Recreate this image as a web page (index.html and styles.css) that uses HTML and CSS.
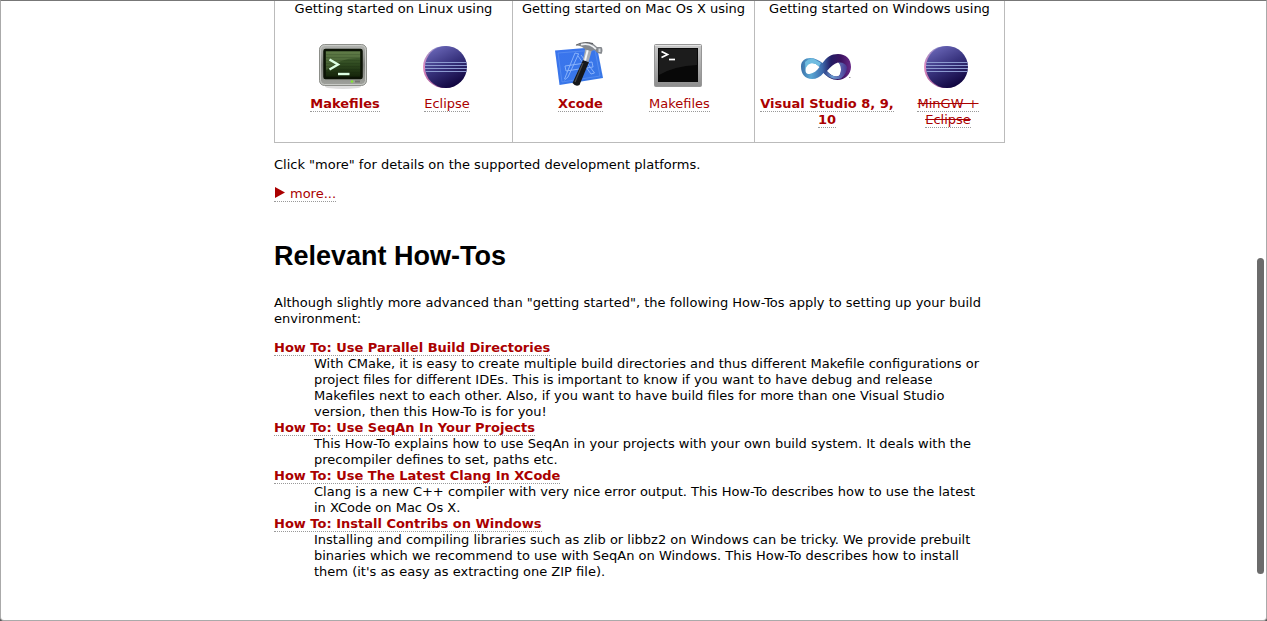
FILE: index.html
```
<!DOCTYPE html>
<html lang="en">
<head>
<meta charset="utf-8">
<title>Getting Started</title>
<link rel="stylesheet" href="styles.css">
</head>
<body>
<svg width="0" height="0" class="defs" aria-hidden="true">
  <defs>
    <linearGradient id="ball" x1="0.25" y1="0" x2="0.75" y2="1"><stop offset="0" stop-color="#6a67b8"/><stop offset="0.45" stop-color="#39347f"/><stop offset="1" stop-color="#0c0038"/></linearGradient>
    <linearGradient id="rim" x1="0" y1="0" x2="0" y2="1"><stop offset="0" stop-color="#8c8cc8"/><stop offset="0.5" stop-color="#e08cc0"/><stop offset="1" stop-color="#a05a9a"/></linearGradient>
    <linearGradient id="case" x1="0" y1="0" x2="0" y2="1"><stop offset="0" stop-color="#b4b6b2"/><stop offset="0.5" stop-color="#7f817c"/><stop offset="1" stop-color="#a0a29d"/></linearGradient>
    <linearGradient id="crt" x1="0" y1="0" x2="0" y2="1"><stop offset="0" stop-color="#55703e"/><stop offset="0.5" stop-color="#2f4a20"/><stop offset="1" stop-color="#122008"/></linearGradient>
    <linearGradient id="steel" x1="0" y1="0" x2="0" y2="1"><stop offset="0" stop-color="#c9c9c9"/><stop offset="1" stop-color="#8e8e8e"/></linearGradient>
    <linearGradient id="paper" x1="0" y1="0" x2="1" y2="1"><stop offset="0" stop-color="#3a74ee"/><stop offset="1" stop-color="#3878e6"/></linearGradient>
    <linearGradient id="loop" gradientUnits="userSpaceOnUse" x1="0" y1="0" x2="50" y2="0"><stop offset="0" stop-color="#3a70a8"/><stop offset="0.2" stop-color="#5aa8d4"/><stop offset="0.42" stop-color="#3d6cae"/><stop offset="0.6" stop-color="#241c64"/><stop offset="0.8" stop-color="#3c1260"/><stop offset="1" stop-color="#6a2a88"/></linearGradient>
    <linearGradient id="fold" gradientUnits="userSpaceOnUse" x1="22" y1="0" x2="46" y2="0"><stop offset="0" stop-color="#2b3580"/><stop offset="0.4" stop-color="#6a9cd2"/><stop offset="1" stop-color="#4a3590"/></linearGradient>
    <symbol id="eclipse" viewBox="0 0 48 48">
      <ellipse cx="23.5" cy="25" rx="21.5" ry="21" fill="url(#rim)"/>
      <ellipse cx="25" cy="25" rx="21" ry="21" fill="url(#ball)"/>
      <path d="M4.500 20.500H45.500M4 23.500H46M4 26.500H46M4.500 29.500H45.500" stroke="#8c9ad0" stroke-width="1"/>
    </symbol>
  </defs>
</svg>
<div class="window">
<main class="page">
  <div class="platforms">
    <section class="platform linux">
      <p class="intro">Getting started on Linux using</p>
      <div class="tools">
        <div class="tool">
          <svg class="icon" viewBox="0 0 48 48" aria-hidden="true">
            <ellipse cx="24" cy="44.500" rx="18" ry="2.500" fill="#ddd"/>
            <rect x="0.500" y="2.500" width="47" height="41" rx="5" fill="url(#case)" stroke="#8c8e89"/>
            <rect x="1.500" y="3.500" width="45" height="39" rx="4" fill="none" stroke="#c8cac6"/>
            <rect x="5.500" y="8" width="37" height="28" rx="1" fill="url(#crt)" stroke="#0b1205" stroke-width="2.500"/>
            <path d="M7 9.500H41V16Q22 15 8 28H7Z" fill="#90ac70" opacity=".25"/>
            <path d="M7 12.500H41M7 15.500H41M7 18.500H41M7 21.500H41M7 24.500H41M7 27.500H41M7 30.500H41" stroke="#10200a" opacity=".15"/>
            <path d="M10.500 17.500L19 22.500L10.500 27.500" fill="none" stroke="#dcffe4" stroke-width="2.400"/>
            <path d="M19 32H30.500" stroke="#dcffe4" stroke-width="2.400"/>
            <circle cx="33" cy="39.500" r="1.300" fill="#80e830"/><path d="M36 39.500H41" stroke="#747670" stroke-width="2"/>
          </svg>
          <a class="preferred" href="#makefiles-linux">Makefiles</a>
        </div>
        <div class="tool">
          <svg class="icon" aria-hidden="true"><use href="#eclipse"/></svg>
          <a href="#eclipse-linux">Eclipse</a>
        </div>
      </div>
    </section>
    <section class="platform mac">
      <p class="intro">Getting started on Mac Os X using</p>
      <div class="tools">
        <div class="tool">
          <svg class="icon" viewBox="0 0 48 48" aria-hidden="true">
            <path d="M0 8.500L42 5L48 36L4.500 43Z" fill="url(#paper)"/>
            <path d="M3 11L40 8L45 34L7 40Z" fill="none" stroke="#6698f4" stroke-width=".6"/>
            <path d="M20 11L9.500 37M23.500 12L13 35L9.500 38M20 11L24 12M23 14L36 32L39.500 31L26 13M10 24L37 20L38 25L11 29Z" fill="none" stroke="#90b8fc" stroke-width=".9"/>
            <path d="M28 18L34 20L24.500 43Q20.500 45 17.500 41Z" fill="#16181a"/>
            <path d="M28 21L20 40" stroke="#4a4a4a" stroke-width="1.200"/>
            <path d="M30.500 6L37 7.500L33.500 20L28 18Z" fill="#a9adb2"/><path d="M33 7L30 18.500" stroke="#f4f6f8" stroke-width="2"/>
            <path d="M20.500 3.500Q29 -1 38 1.500L42 5L46.500 5Q48.500 8 46.500 12L42.500 11L39.500 8L36 9L30 7.500Q27 3.500 20.500 3.500Z" fill="#85898e"/>
            <path d="M21 3Q29 -1 38 1.500" fill="none" stroke="#3c3f44" stroke-width=".8"/>
            <path d="M26 2.700Q33 1 38 4.500L41 7" fill="none" stroke="#eef0f3" stroke-width="1.700"/>
            <path d="M44.500 6.500V10" stroke="#d6d9dd" stroke-width="2"/>
          </svg>
          <a class="preferred" href="#xcode">Xcode</a>
        </div>
        <div class="tool">
          <svg class="icon" viewBox="0 0 48 48" aria-hidden="true">
            <rect x="0.500" y="2.500" width="47" height="42" rx="1" fill="url(#steel)" stroke="#969696"/>
            <path d="M1 3.500H47" stroke="#e3e3e3"/>
            <rect x="4" y="6" width="40" height="34" fill="#080808"/>
            <path d="M5 7H43V23Q20 24 5 33Z" fill="#1c1c1c"/>
            <path d="M7.500 9.500L13.500 12.500L7.500 15.500" fill="none" stroke="#fff" stroke-width="1.700"/>
            <path d="M15 17.500H21" stroke="#fff" stroke-width="1.700"/>
          </svg>
          <a href="#makefiles-mac">Makefiles</a>
        </div>
      </div>
    </section>
    <section class="platform windows">
      <p class="intro">Getting started on Windows using</p>
      <div class="tools">
        <div class="tool">
          <svg class="icon wide" viewBox="0 0 50 48" aria-hidden="true">
            <path fill="url(#loop)" fill-rule="evenodd" d="M0 24.500C0 19 4 16 9 16C14 16 17.500 18 21.500 21C26 15 30 12 37 12C45 12 50 17 50 25C50 32 44 38 36.500 38C31 38 26 35 22.500 31C19 35 15.500 37 11 37C4 37 0 32 0 24.500ZM4.500 28C4.500 31 6 32.500 8.500 32C13 31 15.500 29 18.500 25C16 22.500 13.500 21 10.500 21C6.500 21 4.500 24 4.500 28ZM26 29C29 32.500 32 34.500 35.500 34.500C39 34.500 40 31 40 27.500C40 23.500 39 21 37 20.500C33 21.500 29 25 26 29Z"/>
            <path d="M4 20Q8 16 13 17L20 21L18 24.500Q14 20.500 9.500 21.500Q5 23 4.500 28Z" fill="#6fbce0"/>
            <path d="M23 31L26 29.500Q30 34 35.500 34.500Q40 34 40 27.500Q40 23 37.500 20.500Q44 20 46 25Q46 32 40 36.500Q31 39 23 31Z" fill="url(#fold)"/>
            <path d="M48 35.500H49.500" stroke="#999"/>
          </svg>
          <a class="preferred" href="#visual-studio">Visual Studio 8, 9, 10</a>
        </div>
        <div class="tool">
          <svg class="icon" aria-hidden="true"><use href="#eclipse"/></svg>
          <a class="unavailable" href="#mingw">MinGW + Eclipse</a>
        </div>
      </div>
    </section>
  </div>

  <p>Click "more" for details on the supported development platforms.</p>
  <p><a class="more" href="#more"><svg class="arrow" viewBox="0 0 12 12" aria-hidden="true"><path d="M1 1L11 6.500L1 12Z" fill="#a00"/></svg>more...</a></p>

  <h1>Relevant How-Tos</h1>
  <p>Although slightly more advanced than "getting started", the following How-Tos apply to setting up your build environment:</p>
  <dl>
    <dt><a href="#parallel">How To: Use Parallel Build Directories</a></dt>
    <dd>With CMake, it is easy to create multiple build directories and thus different Makefile configurations or project files for different IDEs. This is important to know if you want to have debug and release Makefiles next to each other. Also, if you want to have build files for more than one Visual Studio version, then this How-To is for you!</dd>
    <dt><a href="#projects">How To: Use SeqAn In Your Projects</a></dt>
    <dd>This How-To explains how to use SeqAn in your projects with your own build system. It deals with the precompiler defines to set, paths etc.</dd>
    <dt><a href="#clang">How To: Use The Latest Clang In XCode</a></dt>
    <dd>Clang is a new C++ compiler with very nice error output. This How-To describes how to use the latest in XCode on Mac Os X.</dd>
    <dt><a href="#contribs">How To: Install Contribs on Windows</a></dt>
    <dd>Installing and compiling libraries such as zlib or libbz2 on Windows can be tricky. We provide prebuilt binaries which we recommend to use with SeqAn on Windows. This How-To describes how to install them (it's as easy as extracting one ZIP file).</dd>
  </dl>
</main>
<div class="scroll-thumb"></div>
</div>
</body>
</html>
```
FILE: styles.css
```
* { box-sizing: border-box; }
html { background: #555; }
body {
  margin: 0;
  color: #000;
  font: 13px/16px Verdana, "DejaVu Sans", sans-serif;
}
.defs { position: absolute; }
.window {
  position: relative;
  min-height: 100vh;
  border: 1px solid #aaa;
  border-top-color: #777;
  border-radius: 0 0 4px 4px;
  background: #fff;
}
.page {
  max-width: 743px;
  margin: 0 auto;
  padding: 0 0 24px 12px;
}
p { margin: 0 0 13px; }
a {
  color: #a00;
  text-decoration: none;
  border-bottom: 1px dotted #999;
}
.platforms {
  display: grid;
  grid-template-columns: 237fr 242fr 250fr;
  margin-bottom: 14px;
  border: 1px solid #bbb;
  border-top: 0;
}
.platform {
  padding-bottom: 14px;
  text-align: center;
}
.platform + .platform { border-left: 1px solid #bbb; }
.intro {
  margin: 0 0 26px;
  line-height: 15px;
  white-space: nowrap;
}
.tools { display: grid; grid-template-columns: 1fr 1fr; }
.linux .tools { padding: 0 14px 0 19px; }
.mac .tools { padding: 0 25px 0 18px; }
.windows .tools { grid-template-columns: 134fr 108fr; padding: 0 2px 0 5px; }
.windows .tool + .tool { padding: 0 16px; }
.icon {
  display: block;
  width: 48px;
  height: 48px;
  margin: 0 0 6px calc(50% - 26px);
}
.wide { width: 50px; }
.preferred, dt { font-weight: bold; }
.unavailable { text-decoration: line-through; }
.arrow { width: 12px; height: 12px; margin-right: 4px; }
h1 {
  margin: 37px 0 22px;
  font: bold 27px/34px Arial, "Liberation Sans", sans-serif;
}
dl { margin: 0; }
dd { margin: 0 16px 0 40px; }
.scroll-thumb {
  position: absolute;
  top: 257px;
  right: 2px;
  width: 7px;
  height: 316px;
  border-radius: 4px;
  background: #6b6b6b;
}
```
